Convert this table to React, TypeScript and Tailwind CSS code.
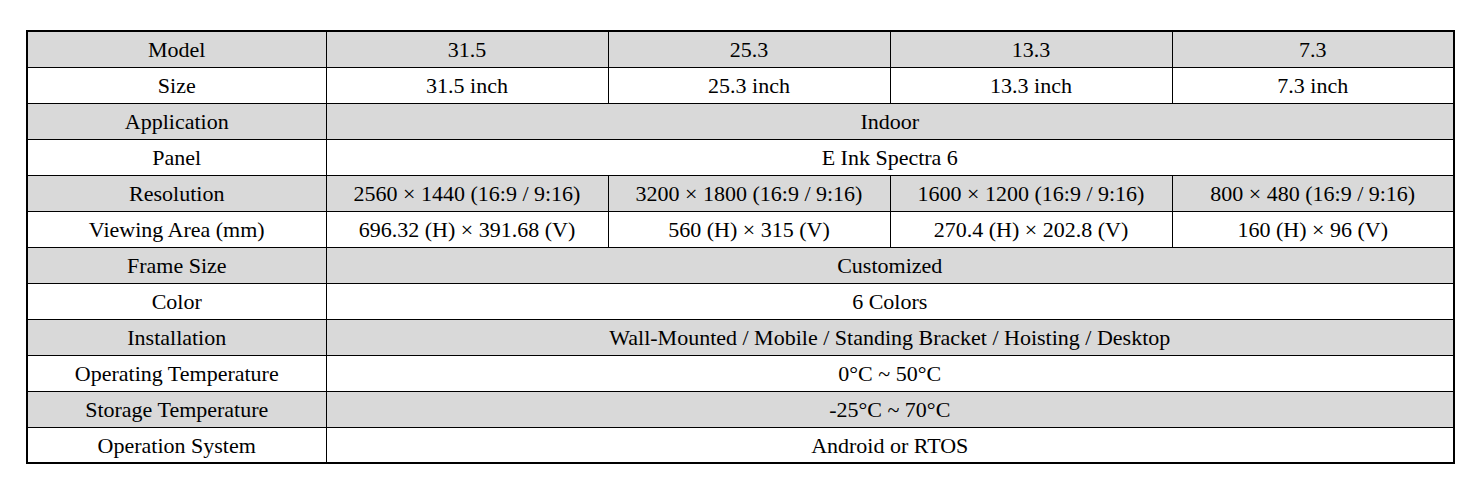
const sizes = ['31.5', '25.3', '13.3', '7.3'];

type Row = { label: string; values: string[] };

const rows: Row[] = [
  { label: 'Model', values: sizes },
  { label: 'Size', values: sizes.map((s) => `${s} inch`) },
  { label: 'Application', values: ['Indoor'] },
  { label: 'Panel', values: ['E Ink Spectra 6'] },
  {
    label: 'Resolution',
    values: [
      '2560 × 1440 (16:9 / 9:16)',
      '3200 × 1800 (16:9 / 9:16)',
      '1600 × 1200 (16:9 / 9:16)',
      '800 × 480 (16:9 / 9:16)',
    ],
  },
  {
    label: 'Viewing Area (mm)',
    values: [
      '696.32 (H) × 391.68 (V)',
      '560 (H) × 315 (V)',
      '270.4 (H) × 202.8 (V)',
      '160 (H) × 96 (V)',
    ],
  },
  { label: 'Frame Size', values: ['Customized'] },
  { label: 'Color', values: ['6 Colors'] },
  { label: 'Installation', values: ['Wall-Mounted / Mobile / Standing Bracket / Hoisting / Desktop'] },
  { label: 'Operating Temperature', values: ['0°C ~ 50°C'] },
  { label: 'Storage Temperature', values: ['-25°C ~ 70°C'] },
  { label: 'Operation System', values: ['Android or RTOS'] },
];

export default function App() {
  return (
    <div className="w-[1481px] h-[489px] bg-white pt-[30px] pl-[26px] font-['Liberation_Serif','Times_New_Roman',serif] text-black">
      <table className="w-[1429px] border-collapse border-2 border-black table-fixed text-[22px] leading-none">
        <colgroup>
          <col className="w-[299px]" />
          <col className="w-[282px]" />
          <col className="w-[282px]" />
          <col className="w-[282px]" />
          <col />
        </colgroup>
        <tbody>
          {rows.map((row, i) => (
            <tr key={row.label} className={i % 2 === 0 ? 'bg-[#d9d9d9] h-[36px]' : 'bg-white h-[36px]'}>
              <td className="border border-black text-center p-0 pt-[2px]">{row.label}</td>
              {row.values.length === 1 ? (
                <td colSpan={4} className="border border-black text-center p-0 pt-[2px]">
                  {row.values[0]}
                </td>
              ) : (
                row.values.map((v, j) => (
                  <td key={j} className="border border-black text-center p-0 pt-[2px]">
                    {v}
                  </td>
                ))
              )}
            </tr>
          ))}
        </tbody>
      </table>
    </div>
  );
}
